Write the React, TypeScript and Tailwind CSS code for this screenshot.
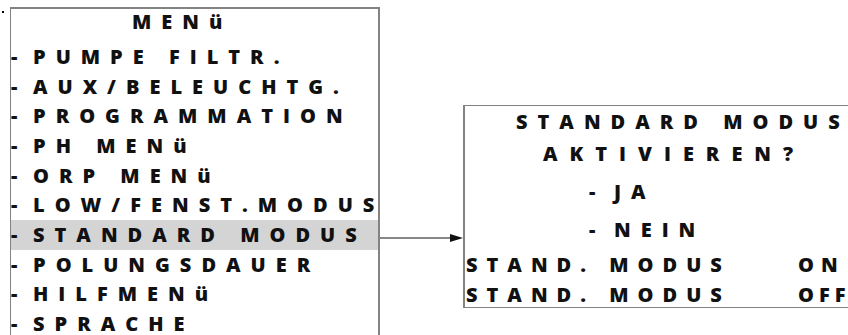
const menuItems = [
  'PUMPE FILTR.',
  'AUX/BELEUCHTG.',
  'PROGRAMMATION',
  'PH MENü',
  'ORP MENü',
  'LOW/FENST.MODUS',
  'STANDARD MODUS',
  'POLUNGSDAUER',
  'HILFMENü',
  'SPRACHE',
];

function MenuRow({ label, active }: { label: string; active?: boolean }) {
  return (
    <div className={`flex h-[29.7px] items-center leading-[26px] ${active ? 'bg-[#d4d4d4]' : ''}`}>
      <span className="w-[22px] shrink-0">-</span>
      <span className="whitespace-pre tracking-[10px]">{label}</span>
    </div>
  );
}

function Arrow() {
  return (
    <svg width="83" height="12" viewBox="0 0 83 12">
      <line x1="0" y1="6" x2="72" y2="6" stroke="#111" strokeWidth="1.2" />
      <polygon points="70,2 83,6 70,10" fill="#111" />
    </svg>
  );
}

export default function App() {
  return (
    <div className="h-[335px] w-[848px] overflow-hidden bg-white font-['Open_Sans',sans-serif] text-[20px] font-extrabold text-[#111]">
      <div className="flex items-start">
        <div className="ml-[2px] mt-[11px] h-[2px] w-[2px] shrink-0 bg-black" />

        {/* main menu */}
        <div className="ml-[6px] mt-[7px] h-[400px] w-[370px] shrink-0 border-l border-r-2 border-t-2 border-[#838383]">
          <div className="h-[33px] pl-[121px] leading-[26px] tracking-[10px]">MENü</div>
          {menuItems.map((item) => (
            <MenuRow key={item} label={item} active={item === 'STANDARD MODUS'} />
          ))}
        </div>

        <div className="mt-[232px] shrink-0">
          <Arrow />
        </div>

        {/* sub menu */}
        <div className="mt-[105px] w-[420px] shrink-0 border-b border-l-2 border-t border-[#838383] leading-[24px]">
          <div className="mt-[4px] h-[24px] pl-[51px] tracking-[10px]">STANDARD MODUS</div>
          <div className="mt-[8px] h-[24px] pl-[78px] tracking-[12px]">AKTIVIEREN?</div>
          <div className="mt-[14px] flex h-[24px] pl-[124px]">
            <span className="w-[25px]">-</span>
            <span className="tracking-[10px]">JA</span>
          </div>
          <div className="mt-[14px] flex h-[24px] pl-[124px]">
            <span className="w-[25px]">-</span>
            <span className="tracking-[10px]">NEIN</span>
          </div>
          <div className="mt-[11px] flex h-[24px] pl-[1px]">
            <span className="w-[332px] shrink-0 tracking-[9px]">STAND. MODUS</span>
            <span className="tracking-[7px]">ON</span>
          </div>
          <div className="mt-[6px] flex h-[24px] pl-[1px]">
            <span className="w-[332px] shrink-0 tracking-[9px]">STAND. MODUS</span>
            <span className="tracking-[5px]">OFF</span>
          </div>
        </div>
      </div>
    </div>
  );
}
